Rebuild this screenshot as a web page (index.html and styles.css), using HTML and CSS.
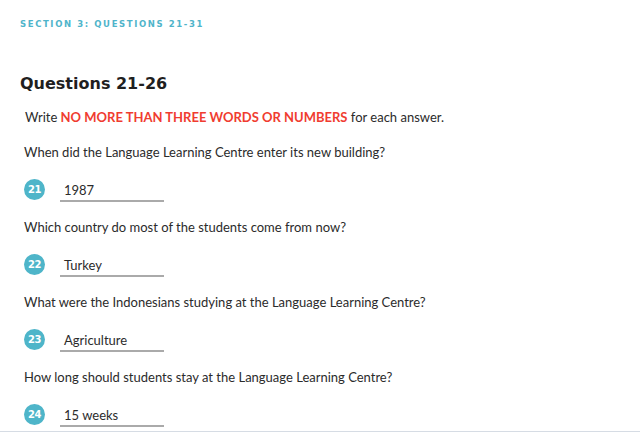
FILE: index.html
```html
<!DOCTYPE html>
<html lang="en">
<head>
  <meta charset="UTF-8" />
  <title>Listening Section 3</title>
  <link rel="stylesheet" href="styles.css">
</head>
<body>

<div class="page">
  <p class="section-label">Section 3: Questions 21-31</p>

  <h2 class="group-title">Questions 21-26</h2>
  <p class="instruction">Write <span class="limit">NO MORE THAN THREE WORDS OR NUMBERS</span> for each answer.</p>

  <div class="question">
    <p class="prompt">When did the Language Learning Centre enter its new building?</p>
    <div class="answer-row">
      <span class="badge">21</span>
      <span class="answer">1987</span>
    </div>
  </div>

  <div class="question">
    <p class="prompt">Which country do most of the students come from now?</p>
    <div class="answer-row">
      <span class="badge">22</span>
      <span class="answer">Turkey</span>
    </div>
  </div>

  <div class="question">
    <p class="prompt">What were the Indonesians studying at the Language Learning Centre?</p>
    <div class="answer-row">
      <span class="badge">23</span>
      <span class="answer">Agriculture</span>
    </div>
  </div>

  <div class="question">
    <p class="prompt">How long should students stay at the Language Learning Centre?</p>
    <div class="answer-row">
      <span class="badge">24</span>
      <span class="answer">15 weeks</span>
    </div>
  </div>
</div>

<div class="footer"></div>

</body>
</html>
```

FILE: styles.css
```css
body {
  margin: 0;
  font-family: "Lato", "Open Sans", sans-serif;
  background: #fff;
  color: #2b2b2b;
}

.page {
  padding: 0 20px;
  height: 431px;
  overflow: hidden;
}

.section-label {
  margin: 0;
  padding-top: 18px;
  font-family: "DejaVu Sans", sans-serif;
  font-size: 8.5px;
  font-weight: bold;
  letter-spacing: 1.6px;
  text-transform: uppercase;
  color: #4fb4ca;
  line-height: 12px;
}

.group-title {
  margin: 43px 0 0;
  font-family: "DejaVu Sans", sans-serif;
  font-size: 16px;
  font-weight: bold;
  color: #1f1f1f;
  line-height: 22px;
}

.instruction {
  margin: 14px 0 0 5px;
  font-size: 13px;
  line-height: 16px;
}

.limit {
  color: #f03c30;
  font-weight: bold;
}

.question {
  margin-left: 4px;
}

.prompt {
  margin: 19px 0 0;
  font-size: 13px;
  line-height: 16px;
}

.answer-row {
  display: flex;
  align-items: center;
  gap: 15px;
  margin-top: 18px;
  height: 22px;
}

.badge {
  width: 21px;
  height: 21px;
  border-radius: 50%;
  background: #4eb5c9;
  color: #fff;
  font-family: "DejaVu Sans", sans-serif;
  font-size: 10px;
  font-weight: bold;
  letter-spacing: -0.5px;
  display: flex;
  align-items: center;
  justify-content: center;
}

.answer {
  width: 100px;
  margin-top: 6px;
  padding: 0 0 2px 4px;
  border-bottom: 2px solid #aaa;
  font-size: 13px;
  line-height: 16px;
}

.footer {
  border-top: 1px solid #d6dce4;
}
```
